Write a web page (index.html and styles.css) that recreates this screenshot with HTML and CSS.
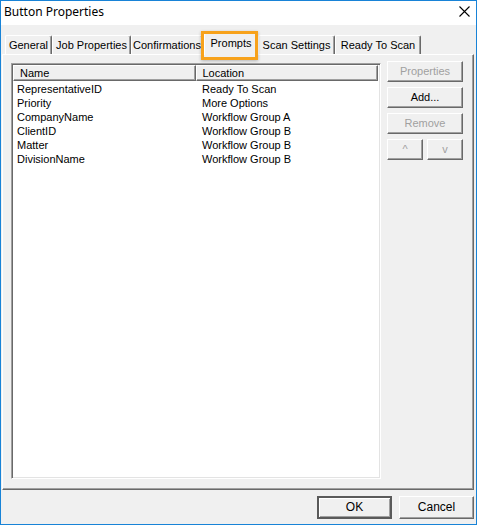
FILE: index.html
```html
<!DOCTYPE html>
<html lang="en">
  <head>
    <meta charset="UTF-8" />
    <title>Button Properties</title>
    <link rel="stylesheet" href="styles.css">
  </head>
  <body>
    <div class="dialog">
      <div class="dialog_title">
        <span class="dialog_title-text">Button Properties</span>
        <svg class="dialog_close" width="11" height="11" viewBox="0 0 11 11">
          <path d="M0.5 0.5 L10.5 10.5 M10.5 0.5 L0.5 10.5" stroke="#000" stroke-width="1.1" fill="none" />
        </svg>
      </div>
      <div class="dialog_body">
        <div class="tabs">
          <div class="tabs_tab tab-general">General</div>
          <div class="tabs_tab tab-job">Job Properties</div>
          <div class="tabs_tab tab-confirm">Confirmations</div>
          <div class="tabs_tab tabs_tab--active tab-prompts">
            Prompts
            <div class="tabs_highlight"></div>
          </div>
          <div class="tabs_tab tab-scan">Scan Settings</div>
          <div class="tabs_tab tab-ready">Ready To Scan</div>
        </div>
        <div class="panel">
          <div class="listview">
            <div class="listview_header">
              <div class="listview_col listview_col--name">Name</div>
              <div class="listview_col listview_col--location">Location</div>
            </div>
            <div class="listview_rows">
              <div class="listview_row"><span>RepresentativeID</span><span>Ready To Scan</span></div>
              <div class="listview_row"><span>Priority</span><span>More Options</span></div>
              <div class="listview_row"><span>CompanyName</span><span>Workflow Group A</span></div>
              <div class="listview_row"><span>ClientID</span><span>Workflow Group B</span></div>
              <div class="listview_row"><span>Matter</span><span>Workflow Group B</span></div>
              <div class="listview_row"><span>DivisionName</span><span>Workflow Group B</span></div>
            </div>
          </div>
          <div class="side_buttons">
            <div class="btn btn--disabled">Properties</div>
            <div class="btn">Add...</div>
            <div class="btn btn--disabled">Remove</div>
            <div class="side_arrows">
              <div class="btn btn--disabled">^</div>
              <div class="btn btn--disabled">v</div>
            </div>
          </div>
        </div>
        <div class="dialog_footer">
          <div class="btn btn--footer btn--default">OK</div>
          <div class="btn btn--footer">Cancel</div>
        </div>
      </div>
    </div>
  </body>
</html>
```

FILE: styles.css
```css
body {
  margin: 0;
  font-family: "Liberation Sans", Arial, sans-serif;
  font-size: 11px;
  color: #000;
}

.dialog {
  width: 477px;
  height: 525px;
  box-sizing: border-box;
  border: 1px solid #1883d7;
  display: flex;
  flex-direction: column;
  background-color: #f0f0f0;
}

.dialog_title {
  height: 24px;
  flex: none;
  background-color: #fff;
  display: flex;
  align-items: center;
  justify-content: space-between;
  padding-left: 3px;
  padding-right: 6px;
}

.dialog_title-text {
  font-family: "Noto Sans", "Open Sans", sans-serif;
  font-size: 12px;
  margin-top: -4px;
}

.dialog_close {
  margin-top: -3px;
}

.dialog_body {
  flex: 1;
  display: flex;
  flex-direction: column;
  padding: 8px 2px 5px 1px;
}

/* tab strip */
.tabs {
  height: 21px;
  flex: none;
  display: flex;
  align-items: flex-end;
  padding-left: 3px;
}

.tabs_tab {
  box-sizing: border-box;
  height: 19px;
  line-height: 17px;
  padding-top: 1px;
  text-align: center;
  border-top: 1px solid #fff;
  border-left: 1px solid #fff;
  border-right: 1px solid #696969;
  box-shadow: inset -1px 0 #a0a0a0;
  border-radius: 2px 2px 0 0;
}

.tab-general { width: 47px; }
.tab-job { width: 79px; }
.tab-confirm { width: 72px; }
.tab-scan { width: 77px; }
.tab-ready { width: 86px; }

.tabs_tab--active {
  position: relative;
  z-index: 1;
  width: 54px;
  height: 22px;
  margin-left: 1px;
  margin-bottom: -1px;
  padding-top: 1px;
  background-color: #f0f0f0;
}

.tabs_highlight {
  position: absolute;
  left: -4px;
  right: -1px;
  top: -3px;
  height: 23px;
  border: 3px solid #f7a21b;
  box-shadow: 0 1px 3px rgba(0, 0, 0, 0.25);
  pointer-events: none;
}

/* tab panel */
.panel {
  height: 436px;
  flex: none;
  box-sizing: border-box;
  border-top: 1px solid #fff;
  border-left: 1px solid #fff;
  border-right: 1px solid #696969;
  border-bottom: 1px solid #696969;
  box-shadow: inset -1px -1px #a0a0a0;
  display: flex;
  align-items: flex-start;
  padding: 8px 10px 10px 8px;
  gap: 6px;
}

.listview {
  width: 370px;
  height: 416px;
  box-sizing: border-box;
  background-color: #fff;
  border-top: 1px solid #a0a0a0;
  border-left: 1px solid #a0a0a0;
  border-right: 1px solid #fff;
  border-bottom: 1px solid #fff;
  box-shadow: inset 1px 1px #696969, inset -1px -1px #e3e3e3;
  padding: 1px 2px 1px 1px;
}

.listview_header {
  display: flex;
  height: 16px;
}

.listview_col {
  box-sizing: border-box;
  background-color: #f0f0f0;
  border-top: 1px solid #fff;
  border-left: 1px solid #fff;
  border-right: 1px solid #696969;
  border-bottom: 1px solid #696969;
  box-shadow: inset -1px -1px #a0a0a0;
  line-height: 14px;
  padding-left: 6px;
}

.listview_col--name {
  width: 183px;
}

.listview_col--location {
  width: 183px;
}

.listview_rows {
  padding-top: 1px;
}

.listview_row {
  display: grid;
  grid-template-columns: 183px 1fr;
  height: 14px;
  line-height: 14px;
}

.listview_row span:first-child {
  padding-left: 4px;
}

.listview_row span:last-child {
  padding-left: 6px;
}

/* buttons */
.side_buttons {
  width: 76px;
  margin-top: -2px;
  display: flex;
  flex-direction: column;
  gap: 5px;
}

.side_arrows {
  display: flex;
  gap: 4px;
}

.side_arrows .btn {
  flex: 1;
}

.btn {
  box-sizing: border-box;
  height: 21px;
  line-height: 19px;
  text-align: center;
  background-color: #f0f0f0;
  border-top: 1px solid #fff;
  border-left: 1px solid #fff;
  border-right: 1px solid #696969;
  border-bottom: 1px solid #696969;
  box-shadow: inset -1px -1px #a0a0a0;
}

.btn--disabled {
  color: #a0a0a0;
}

.dialog_footer {
  margin-top: 6px;
  display: flex;
  justify-content: flex-end;
  gap: 7px;
}

.btn--footer {
  width: 75px;
  height: 23px;
  line-height: 21px;
  font-size: 12px;
}

.btn--default {
  outline: 1px solid #5a5a5a;
  outline-offset: -1px;
  border-width: 2px;
  border-color: #5a5a5a;
  box-shadow: inset 1px 1px #fff, inset -1px -1px #a0a0a0;
  line-height: 19px;
}
```
